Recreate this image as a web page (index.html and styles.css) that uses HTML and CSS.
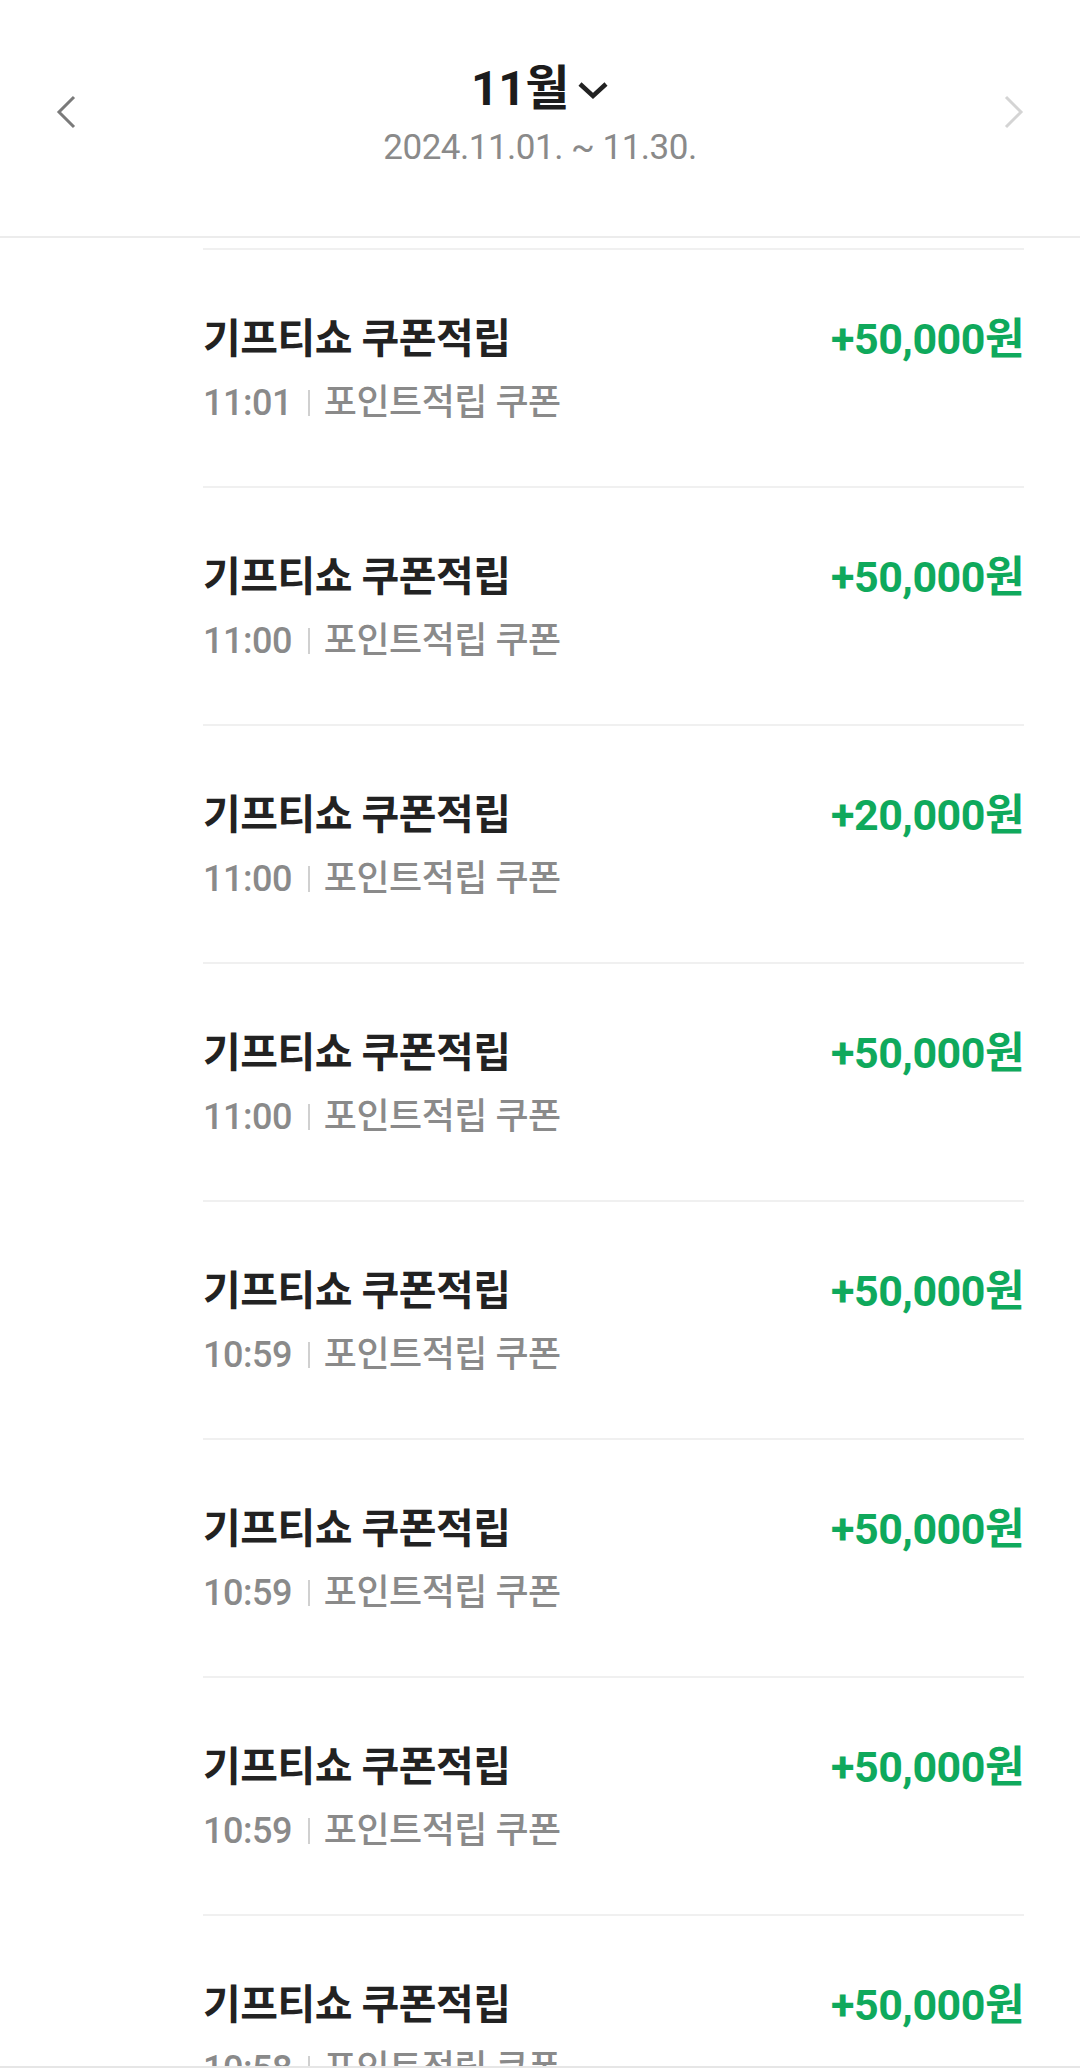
FILE: index.html
```html
<!DOCTYPE html>
<html>
<head>
    <title>포인트 내역</title>
    <link rel="stylesheet" href="styles.css">
</head>
<body>
    <!-- Month header -->
    <div class="header">
        <button class="nav-btn prev">
            <svg width="24" height="36" viewBox="0 0 24 36"><polyline points="20,3 5,18 20,33" fill="none" stroke="#7a7a7a" stroke-width="3"/></svg>
        </button>
        <div class="month">
            <div class="month-title">
                <span>11월</span>
                <svg width="32" height="20" viewBox="0 0 32 20"><polyline points="3,4 16,16 29,4" fill="none" stroke="#222" stroke-width="4.5"/></svg>
            </div>
            <div class="month-range">2024.11.01. ~ 11.30.</div>
        </div>
        <button class="nav-btn next">
            <svg width="24" height="36" viewBox="0 0 24 36"><polyline points="4,3 19,18 4,33" fill="none" stroke="#d4d4d4" stroke-width="3"/></svg>
        </button>
    </div>

    <div class="list" id="list"></div>

    <div class="bottom-line"></div>

    <script>
        var items = [
            { time: '11:01', amount: '+50,000원' },
            { time: '11:00', amount: '+50,000원' },
            { time: '11:00', amount: '+20,000원' },
            { time: '11:00', amount: '+50,000원' },
            { time: '10:59', amount: '+50,000원' },
            { time: '10:59', amount: '+50,000원' },
            { time: '10:59', amount: '+50,000원' },
            { time: '10:58', amount: '+50,000원' }
        ];

        var list = document.getElementById('list');

        items.forEach(function(item) {
            var row = document.createElement('div');
            row.className = 'row';
            row.innerHTML =
                '<div class="row-info">' +
                    '<div class="row-title">기프티쇼 쿠폰적립</div>' +
                    '<div class="row-sub"><span>' + item.time + '</span><i class="bar"></i><span>포인트적립 쿠폰</span></div>' +
                '</div>' +
                '<div class="row-amount">' + item.amount + '</div>';
            list.appendChild(row);
        });
    </script>
</body>
</html>
```

FILE: styles.css
```css
body {
    margin: 0;
    height: 2068px;
    overflow: hidden;
    background: #FFFFFF;
    font-family: Roboto, 'Noto Sans CJK KR', sans-serif;
    color: #222222;
}

.header {
    display: flex;
    align-items: center;
    justify-content: space-between;
    height: 236px;
    border-bottom: 2px solid #ececec;
    padding: 0 50px;
}

.nav-btn {
    background: none;
    border: none;
    padding: 0;
    width: 32px;
    height: 40px;
    display: flex;
    align-items: center;
    justify-content: center;
    margin-top: -12px;
}

.month {
    display: flex;
    flex-direction: column;
    align-items: center;
    gap: 9px;
    margin-top: -6px;
}

.month-title {
    display: flex;
    align-items: center;
    gap: 8px;
    font-size: 48px;
    font-weight: 700;
    line-height: 56px;
    color: #1c1c1c;
    letter-spacing: -0.5px;
}

.month-title svg {
    margin-top: 2px;
}

.month-range {
    font-size: 35px;
    line-height: 44px;
    color: #8a8a8a;
    letter-spacing: -0.5px;
}

.list {
    padding: 10px 56px 0 203px;
}

.row {
    display: flex;
    justify-content: space-between;
    align-items: flex-start;
    border-top: 2px solid #f0f0f0;
    padding: 65px 0 61px;
}

.row-info {
    display: flex;
    flex-direction: column;
    gap: 18px;
}

.row-title {
    font-size: 41px;
    font-weight: 700;
    line-height: 48px;
    color: #222222;
    letter-spacing: -0.5px;
}

.row-sub {
    display: flex;
    align-items: center;
    font-size: 36px;
    font-weight: 500;
    line-height: 44px;
    color: #8a8a8a;
    letter-spacing: -0.5px;
}

.bar {
    width: 2px;
    height: 26px;
    background: #d0d0d0;
    margin: 0 14px 0 16px;
}

.row-amount {
    font-size: 43px;
    font-weight: 700;
    line-height: 48px;
    color: #0fa95c;
    letter-spacing: -0.5px;
}

.bottom-line {
    position: fixed;
    left: 0;
    right: 0;
    bottom: 0;
    height: 2px;
    background: #e6e6e6;
}
```
